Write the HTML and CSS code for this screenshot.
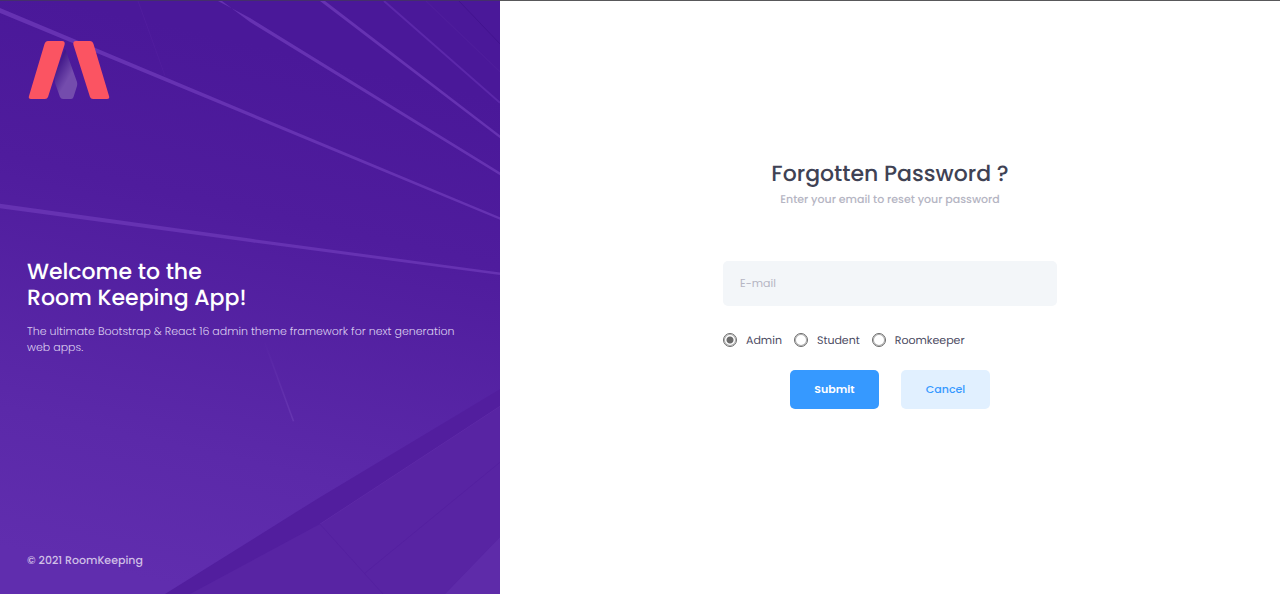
FILE: index.html
```html
<!DOCTYPE html>
<html lang="en">
<head>
  <meta charset="utf-8">
  <meta name="viewport" content="width=device-width, initial-scale=1">
  <title>RoomKeeping | Forgotten Password</title>
  <link rel="stylesheet" href="styles.css">
</head>
<body>
  <div class="login">
    <aside class="aside">
      <svg class="aside-art" viewBox="0 0 500 594" preserveAspectRatio="none" aria-hidden="true">
        <defs>
          <linearGradient id="sky" gradientUnits="userSpaceOnUse" x1="330" y1="60" x2="210" y2="594">
            <stop offset="0" stop-color="#4a1899"/>
            <stop offset=".3" stop-color="#4f1c9d"/>
            <stop offset=".75" stop-color="#5b29a9"/>
            <stop offset="1" stop-color="#602dae"/>
          </linearGradient>
          <linearGradient id="fade" gradientUnits="userSpaceOnUse" x1="264" y1="340" x2="294" y2="422">
            <stop offset="0" stop-color="#7040b8" stop-opacity="0"/>
            <stop offset="1" stop-color="#7040b8" stop-opacity=".6"/>
          </linearGradient>
        </defs>
        <rect width="500" height="594" fill="url(#sky)"/>
        <g fill="#6632b2">
          <path d="M0 7L250 112L500 216.500L500 219L250 115.500L0 12Z"/>
          <path d="M218 0L250 17L500 171.500L500 174.500L250 21L222 0Z"/>
          <path d="M320 0L325 0L500 134.500L500 137.500Z"/>
          <path d="M0 203L250 238L500 272L500 274.500L250 241.500L0 207.500Z"/>
        </g>
        <path d="M384 0L500 102" stroke="#5c28aa" stroke-width="2"/>
        <path d="M426 0L500 71" stroke="#4f1d9c" stroke-width="1.200"/>
        <path d="M459 0L500 43" stroke="#42138f" stroke-width="1"/>
        <path d="M138 0L165 75" stroke="#501d9e" stroke-width="1"/>
        <path d="M264 340L293.500 421" stroke="url(#fade)" stroke-width="1.500"/>
        <path d="M165 594L320 497L500 389V594Z" fill="#521e9e"/>
        <path d="M190 594L320 524L500 406V537L445 594Z" fill="#5824a3"/>
        <path d="M320 524L500 406" stroke="#5d29a7" stroke-width="1"/>
        <path d="M320 524L383 594M365 573L500 462" stroke="#5420a0" stroke-width="1" fill="none"/>
        <path d="M445 594L500 537V594Z" fill="#5e2ba9"/>
      </svg>
      <a class="logo" href="#" aria-label="RoomKeeping home">
        <svg width="82" height="60" viewBox="0 0 82 60" aria-hidden="true">
          <defs>
            <linearGradient id="core" gradientUnits="userSpaceOnUse" x1="29" y1="26" x2="43" y2="34">
              <stop offset="0" stop-color="#42198a"/>
              <stop offset="1" stop-color="#744cad"/>
            </linearGradient>
          </defs>
          <path d="M37 9Q38 10 39 14L49 42Q49.500 44 49 46L45.500 57Q45 59 43 59H35Q33 59 32 57L27 43V34Z" fill="url(#core)"/>
          <path d="M20 1H34Q37.500 1 36.500 5L20 57Q19.300 59 17 59H3Q0 59 1 56L16.500 4Q17.500 1 20 1Z" fill="#fb5462"/>
          <path d="M48 1H62Q64.500 1 65.500 4L81 56Q82 59 79 59H65Q62.700 59 62 57L45.500 5Q44.500 1 48 1Z" fill="#fb5462"/>
        </svg>
      </a>
      <div class="intro">
        <h1 class="intro-title">Welcome to the<br>Room Keeping App!</h1>
        <p class="intro-text">The ultimate Bootstrap &amp; React 16 admin theme framework for next generation web apps.</p>
      </div>
      <footer class="copyright">© 2021 RoomKeeping</footer>
    </aside>
    <main class="content">
      <form class="reset-form">
        <h2 class="form-title">Forgotten Password ?</h2>
        <p class="form-hint">Enter your email to reset your password</p>
        <input class="email" type="email" placeholder="E-mail" aria-label="E-mail">
        <div class="roles" role="radiogroup" aria-label="Role">
          <label class="role"><input class="radio" type="radio" name="role" value="admin" checked>Admin</label>
          <label class="role"><input class="radio" type="radio" name="role" value="student">Student</label>
          <label class="role"><input class="radio" type="radio" name="role" value="roomkeeper">Roomkeeper</label>
        </div>
        <div class="actions">
          <button class="button button-primary" type="submit">Submit</button>
          <button class="button button-light" type="button">Cancel</button>
        </div>
      </form>
    </main>
  </div>
</body>
</html>
```
FILE: styles.css
```css
* {
  box-sizing: border-box;
}

body {
  margin: 0;
  color: #4b4b62;
  background: #fff;
  font-family: Poppins, Inter, "Open Sans", sans-serif;
  font-size: 11px;
  text-rendering: geometricPrecision;
}

h1,
h2,
p {
  margin: 0;
}

.login {
  display: grid;
  grid-template-columns: 25fr 39fr;
  min-height: 100vh;
  border-top: 1px solid #58585a;
}

.aside {
  position: relative;
  z-index: 0;
  display: flex;
  flex-direction: column;
  justify-content: space-between;
  padding: 39px 27px 26px;
  margin-top: -1px;
  border-top: 1px solid #44306b;
  color: #fff;
  background: #4f1c9d;
}

.aside-art {
  position: absolute;
  inset: 0;
  z-index: -1;
  width: 100%;
  height: 100%;
}

.logo {
  align-self: flex-start;
  padding-left: 1px;
}

.logo svg {
  display: block;
}

.intro {
  padding-bottom: 38px;
}

.intro-title {
  font-size: 22px;
  font-weight: 500;
  line-height: 26px;
}

.intro-text {
  margin-top: 12px;
  font-weight: 300;
  line-height: 16px;
  color: #dccff0;
}

.copyright {
  font-weight: 500;
  line-height: 16px;
  color: #cfbfe6;
}

.content {
  display: flex;
  align-items: center;
  justify-content: center;
  padding: 24px;
}

.reset-form {
  width: 100%;
  max-width: 334px;
  margin-bottom: 26px;
}

.form-title {
  font-size: 22px;
  font-weight: 500;
  line-height: 26px;
  text-align: center;
  color: #3f4254;
}

.form-hint {
  margin-top: 4px;
  font-weight: 500;
  line-height: 16px;
  text-align: center;
  color: #b5b5c3;
}

.email {
  display: block;
  width: 100%;
  height: 45px;
  margin-top: 54px;
  padding: 0 17px;
  border: 0;
  border-radius: 5px;
  font: inherit;
  color: inherit;
  background: #f3f6f9;
}

.email::placeholder {
  color: #b5b5c3;
}

.roles {
  display: flex;
  gap: 12px;
  margin-top: 26px;
}

.role {
  display: flex;
  align-items: center;
  gap: 9px;
  line-height: 16px;
}

.radio {
  appearance: none;
  width: 14px;
  height: 14px;
  margin: 0;
  border: 1px solid #6b6b6b;
  border-radius: 50%;
  box-shadow: inset 0 0 0 1px #b0b0b0;
}

.radio:checked {
  background: radial-gradient(circle, #6b6b6b 3px, transparent 4px);
}

.actions {
  display: flex;
  justify-content: center;
  gap: 22px;
  margin-top: 22px;
}

.button {
  width: 89px;
  height: 39px;
  border: 0;
  border-radius: 5px;
  font: inherit;
  font-weight: 500;
}

.button-primary {
  font-weight: 600;
  color: #fff;
  background: #3699ff;
}

.button-light {
  color: #3699ff;
  background: #e1f0ff;
}
```
